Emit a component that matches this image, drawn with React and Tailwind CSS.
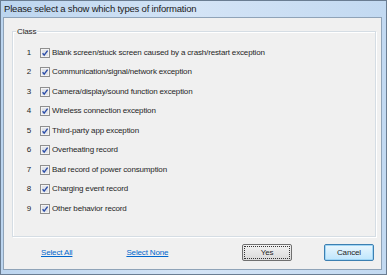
const ITEMS = [
  'Blank screen/stuck screen caused by a crash/restart exception',
  'Communication/signal/network exception',
  'Camera/display/sound function exception',
  'Wireless connection exception',
  'Third-party app exception',
  'Overheating record',
  'Bad record of power consumption',
  'Charging event record',
  'Other behavior record',
]

function Check() {
  return (
    <svg width="10" height="10" viewBox="0 0 10 10" className="shrink-0">
      <rect x="0.5" y="0.5" width="9" height="9" fill="#f4f4f4" stroke="#8f8f8f" />
      <rect x="1.5" y="1.5" width="7" height="7" fill="#e2e4e8" stroke="#f8f8f8" strokeWidth="0.6" />
      <path d="M2.6 5.2 L4.2 7.2 L7.6 2.6" fill="none" stroke="#2c4da8" strokeWidth="1.4" />
    </svg>
  )
}

export default function App() {
  return (
    <div
      className="w-[387px] h-[275px] flex flex-col bg-gradient-to-r from-[#bcd5ef] via-[#d4e4f6] to-[#c2d9f1] border border-[#6a7d92] overflow-hidden"
      style={{ fontFamily: '"Liberation Sans", Arial, sans-serif' }}
    >
      <div className="h-[16px] flex items-center px-[3px] text-[9.5px] tracking-[-0.2px] text-[#1a1a1a]">
        Please select a show which types of information
      </div>
      <div className="flex-1 ml-[2px] mr-[4px] mb-[4px] bg-[#f0f0f0] border border-[#8fa3b8] flex flex-col text-[8px] tracking-[-0.15px] text-[#1f1f1f]">
        <div className="relative mt-[13px] ml-[8px] mr-[5px] h-[206px] border border-[#d5dde4] shadow-[inset_1px_1px_0_#fff,1px_1px_0_#fff] pt-[11px]">
          <span className="absolute -top-[6px] left-[3px] px-[1px] bg-[#f0f0f0] leading-[11px]">Class</span>
          <div className="flex flex-col">
            {ITEMS.map((t, i) => (
              <div key={i} className="h-[19.5px] flex items-center">
                <span className="w-[27px] text-right pr-[9px]">{i + 1}</span>
                <Check />
                <span className="ml-[2px]">{t}</span>
              </div>
            ))}
          </div>
        </div>
        <div className="flex items-center mt-[7px] h-[17px]">
          <span className="ml-[37px] text-[#0066cc] underline">Select All</span>
          <span className="ml-[54px] text-[#0066cc] underline">Select None</span>
          <div className="ml-auto flex gap-[32px] mr-[7px]">
            <div className="w-[50px] h-[17px] border border-[#707070] rounded-[2px] bg-gradient-to-b from-[#f2f2f2] to-[#d9d9d9] p-[1px]">
              <div className="w-full h-full border border-dotted border-[#333] flex items-center justify-center">Yes</div>
            </div>
            <div className="w-[50px] h-[17px] border border-[#3c7fb1] rounded-[2px] bg-gradient-to-b from-[#eaf6fd] to-[#bee6fd] flex items-center justify-center shadow-[inset_0_0_0_1px_#9fd5f5]">Cancel</div>
          </div>
        </div>
      </div>
    </div>
  )
}
